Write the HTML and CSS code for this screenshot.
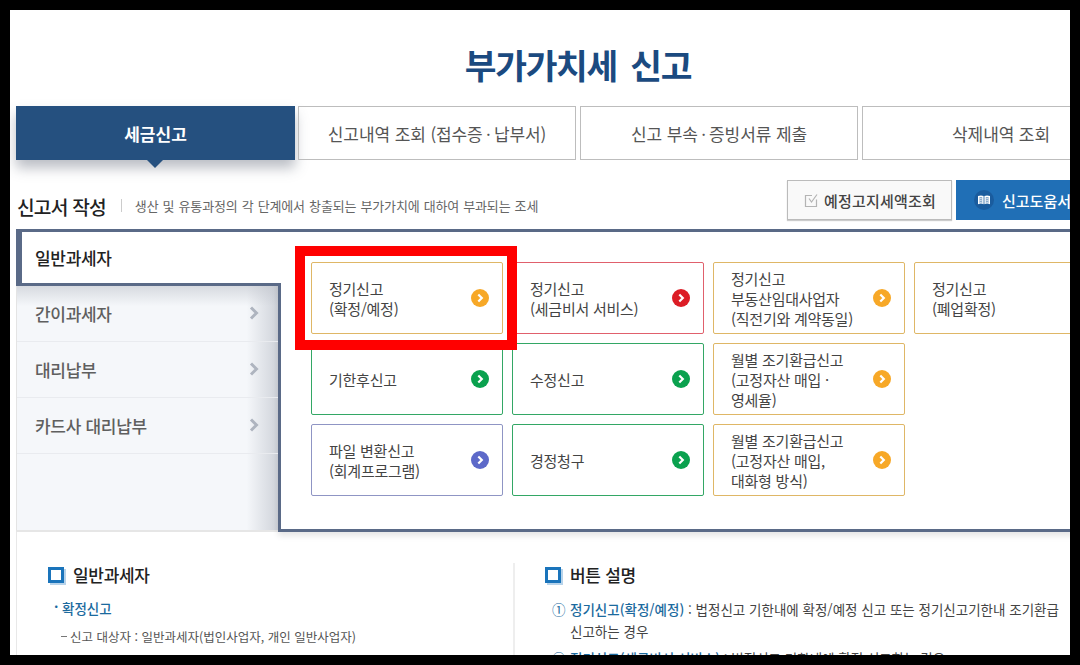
FILE: index.html
```html
<!DOCTYPE html>
<html lang="ko">
<head>
<meta charset="utf-8">
<title>부가가치세 신고</title>
<link rel="stylesheet" href="styles.css">
</head>
<body>
<div class="screen">
  <div class="page">
    <h1 class="title">부가가치세 신고</h1>
    <nav class="tabs">
      <a class="tab active">세금신고</a>
      <a class="tab">신고내역 조회 (접수증&thinsp;·&thinsp;납부서)</a>
      <a class="tab">신고 부속&thinsp;·&thinsp;증빙서류 제출</a>
      <a class="tab">삭제내역 조회</a>
    </nav>
    <div class="head-row">
      <div class="head-text">
        <h2>신고서 작성</h2>
        <p>생산 및 유통과정의 각 단계에서 창출되는 부가가치에 대하여 부과되는 조세</p>
      </div>
      <div class="head-btns">
        <a class="btn-light">
          <svg class="ico-check" viewBox="0 0 15 15"><path d="M12.5 6.5V13.5H1.5V2.5H8" fill="none" stroke="#b4b4b4" stroke-width="1.2"/><path d="M5 5.5 7.5 9 13 1.5" fill="none" stroke="#b4b4b4" stroke-width="1.2"/></svg>
          예정고지세액조회
        </a>
        <a class="btn-blue">
          <span class="book"><svg viewBox="0 0 20 20"><path d="M4 6c2-.8 4-.8 5.6 0v8.2C8 13.400 6 13.400 4 14.200zM16 6c-2-.8-4-.8-5.600 0v8.200c1.600-.8 3.600-.8 5.600 0z" fill="#fff"/><path d="M5.300 8c1-.3 2-.3 3 0M5.300 10c1-.3 2-.3 3 0M5.300 12c1-.3 2-.3 3 0M11.700 8c1-.3 2-.3 3 0M11.700 10c1-.3 2-.3 3 0M11.700 12c1-.3 2-.3 3 0" stroke="#1a5c9e" stroke-width=".8" fill="none"/></svg></span>
          신고도움서비스
        </a>
      </div>
    </div>
    <section class="panel">
      <ul class="side">
        <li class="side-item on">일반과세자</li>
        <li class="side-item">간이과세자<svg class="chev" viewBox="0 0 10 14"><path d="M2 1.500l5.500 5.500-5.500 5.500" fill="none" stroke="#aeb4bf" stroke-width="3"/></svg></li>
        <li class="side-item">대리납부<svg class="chev" viewBox="0 0 10 14"><path d="M2 1.500l5.500 5.500-5.500 5.500" fill="none" stroke="#aeb4bf" stroke-width="3"/></svg></li>
        <li class="side-item">카드사 대리납부<svg class="chev" viewBox="0 0 10 14"><path d="M2 1.500l5.500 5.500-5.500 5.500" fill="none" stroke="#aeb4bf" stroke-width="3"/></svg></li>
      </ul>
      <div class="main">
        <div class="grid">
          <a class="card yellow"><span>정기신고<br>(확정/예정)</span><svg class="go" viewBox="0 0 18 18"><circle cx="9" cy="9" r="9"/><path d="M7.300 5.500 10.800 9l-3.500 3.500"/></svg></a>
          <a class="card red"><span>정기신고<br>(세금비서 서비스)</span><svg class="go" viewBox="0 0 18 18"><circle cx="9" cy="9" r="9"/><path d="M7.300 5.500 10.800 9l-3.500 3.500"/></svg></a>
          <a class="card yellow"><span>정기신고<br>부동산임대사업자<br>(직전기와 계약동일)</span><svg class="go" viewBox="0 0 18 18"><circle cx="9" cy="9" r="9"/><path d="M7.300 5.500 10.800 9l-3.500 3.500"/></svg></a>
          <a class="card yellow"><span>정기신고<br>(폐업확정)</span></a>
          <a class="card green"><span>기한후신고</span><svg class="go" viewBox="0 0 18 18"><circle cx="9" cy="9" r="9"/><path d="M7.300 5.500 10.800 9l-3.500 3.500"/></svg></a>
          <a class="card green"><span>수정신고</span><svg class="go" viewBox="0 0 18 18"><circle cx="9" cy="9" r="9"/><path d="M7.300 5.500 10.800 9l-3.500 3.500"/></svg></a>
          <a class="card yellow"><span>월별 조기환급신고<br>(고정자산 매입 ·<br>영세율)</span><svg class="go" viewBox="0 0 18 18"><circle cx="9" cy="9" r="9"/><path d="M7.300 5.500 10.800 9l-3.500 3.500"/></svg></a>
          <span class="blank"></span>
          <a class="card violet"><span>파일 변환신고<br>(회계프로그램)</span><svg class="go" viewBox="0 0 18 18"><circle cx="9" cy="9" r="9"/><path d="M7.300 5.500 10.800 9l-3.500 3.500"/></svg></a>
          <a class="card green"><span>경정청구</span><svg class="go" viewBox="0 0 18 18"><circle cx="9" cy="9" r="9"/><path d="M7.300 5.500 10.800 9l-3.500 3.500"/></svg></a>
          <a class="card yellow"><span>월별 조기환급신고<br>(고정자산 매입,<br>대화형 방식)</span><svg class="go" viewBox="0 0 18 18"><circle cx="9" cy="9" r="9"/><path d="M7.300 5.500 10.800 9l-3.500 3.500"/></svg></a>
        </div>
      </div>
      <div class="highlight"></div>
    </section>
    <section class="info">
      <div class="info-col left">
        <h3><i class="sq"></i>일반과세자</h3>
        <p class="sub"><b>확정신고</b></p>
        <p class="dash">신고 대상자 : 일반과세자(법인사업자, 개인 일반사업자)</p>
        <p class="dash">신고 기간 : 과세기간 종료 후</p>
      </div>
      <div class="info-col right">
        <h3><i class="sq"></i>버튼 설명</h3>
        <p class="num"><em>①</em><span><b>정기신고(확정/예정)</b> : 법정신고 기한내에 확정/예정 신고 또는 정기신고기한내 조기환급 신고하는 경우</span></p>
        <p class="num"><em>②</em><span><b>정기신고(세금비서 서비스)</b> : 법정신고 기한내에 확정 신고하는 경우</span></p>
      </div>
    </section>
  </div>
</div>
</body>
</html>
```
FILE: styles.css
```css
* { box-sizing: border-box; }
html, body { margin: 0; height: 100%; background: #000; overflow: hidden; }
body { padding: 10px; font-family: "Noto Sans CJK KR", "Noto Sans", sans-serif; color: #444; }
a { display: block; }
.screen { width: 1060px; height: 645px; background: #fff; overflow: hidden; padding-left: 6px; }
.page { width: 1124px; }

.title { margin: 0; height: 96px; padding-top: 29px; text-align: center; font-size: 34.500px; line-height: 50px; font-weight: 700; color: #1b4a80; letter-spacing: -1.300px; word-spacing: 5px; }

.tabs { display: grid; grid-template-columns: repeat(4, 278px); gap: 4px; height: 54px; }
.tab { position: relative; display: flex; align-items: center; justify-content: center; border: 1px solid #bdbdbd; font-size: 17px; color: #555; letter-spacing: -.1px; }
.tab.active { width: 279px; background: #25507f; border-color: #25507f; color: #fff; font-weight: 700; box-shadow: 0 8px 12px rgba(60, 70, 90, .35); letter-spacing: 0; }
.tab.active::after { content: ""; position: absolute; left: 130px; top: 53px; border: 8px solid transparent; border-top-color: #25507f; border-bottom-width: 0; }

.head-row { display: flex; justify-content: space-between; align-items: flex-start; margin-top: 20px; height: 49px; }
.head-text { display: flex; align-items: center; height: 54px; }
.head-text h2 { margin: 0; font-size: 19.200px; font-weight: 500; color: #222; letter-spacing: -.8px; padding-left: 1px; padding-right: 15px; }
.head-text p { margin: 0 0 4px; padding-left: 14px; position: relative; font-size: 13px; color: #666; letter-spacing: -.15px; word-spacing: .65px; }
.head-text p::before { content: ""; position: absolute; left: 0; top: 3px; height: 13px; border-left: 1px solid #ccc; }
.head-btns { display: flex; gap: 4px; }
.btn-light { display: flex; align-items: center; width: 165px; height: 40px; padding-left: 16px; gap: 5px; background: #f9f9f9; border: 1px solid #bbb; box-shadow: 0 1px 1px #ccc; font-size: 15px; font-weight: 500; color: #444; letter-spacing: .2px; }
.ico-check { width: 15px; height: 15px; }
.btn-blue { display: flex; align-items: center; width: 184px; height: 40px; padding-left: 18px; gap: 8px; background: #206fb6; font-size: 15px; font-weight: 500; color: #fff; }
.book { width: 20px; height: 20px; border-radius: 50%; background: #1a5c9e; display: flex; }

.panel { position: relative; display: flex; height: 303px; border-top: 3px solid #5a6a87; }
.side { width: 262px; margin: 0; padding: 0; list-style: none; background: linear-gradient(180deg, rgba(190, 194, 202, .55) 54px, rgba(190, 194, 202, 0) 74px), linear-gradient(90deg, #f5f7fa 0, #f5f7fa 88%, #cfd3da 100%); border-left: 1px solid #e4e4e4; border-bottom: 2px solid #e6e6e6; }
.side-item { position: relative; display: flex; align-items: center; height: 56px; padding-left: 18px; font-size: 17px; font-weight: 500; color: #5f5f5f; letter-spacing: -.3px; border-bottom: 1px solid #e9ebef; }
.side-item.on { z-index: 1; width: 265px; margin-left: -1px; height: 54px; color: #222; background: #fff; border-left: 6px solid #5a6a87; border-bottom: 3px solid #5a6a87; padding-left: 13px; }
.chev { position: absolute; left: 232px; top: 20px; width: 10px; height: 14px; }
.main { flex: 1; padding: 30px 0 0 30px; border-left: 3px solid #5a6a87; border-bottom: 3px solid #5a6a87; box-shadow: 0 4px 6px rgba(0, 0, 0, .1); }
.grid { display: grid; grid-template-columns: repeat(4, 192px); grid-auto-rows: 72px; gap: 9px; }
.card { display: flex; align-items: center; justify-content: space-between; padding: 0 13.500px 0 17px; border: 1px solid; border-radius: 2px; font-size: 15px; line-height: 20px; color: #444; letter-spacing: -.25px; }
.card span { padding-top: 2px; }
.go { width: 18px; height: 18px; flex: none; }
.go path { fill: none; stroke: #fff; stroke-width: 2.200; }
.yellow { border-color: #dfb766; }
.yellow .go circle { fill: #f7a827; }
.red { border-color: #e0606c; }
.red .go circle { fill: #dc1d26; }
.green { border-color: #33a765; }
.green .go circle { fill: #0aa14e; }
.violet { border-color: #8f95c4; }
.violet .go circle { fill: #5d69c9; }
.highlight { position: absolute; z-index: 2; left: 279px; top: 14px; width: 222px; height: 104px; border: 10px solid #f00; }

.info { display: flex; height: 130px; padding-top: 31px; border-left: 1px solid #e8e8e8; }
.info-col { font-size: 13.500px; line-height: 22px; color: #444; }
.info-col.left { width: 498px; padding-left: 31px; border-right: 2px solid #eee; }
.info-col.right { padding-left: 30px; width: 545px; }
.info-col h3 { display: flex; align-items: center; margin: 0 0 9px; font-size: 17px; font-weight: 500; line-height: 24px; color: #222; letter-spacing: -.3px; }
.info-col.right h3 { margin-bottom: 11px; }
.sq { width: 16px; height: 16px; margin-right: 9px; border: 3px solid #1a74bb; box-shadow: 2px 2px 0 #b7d3ea; }
.info-col p { margin: 0; }
.sub { position: relative; padding-left: 14px; line-height: 24px; }
.sub b { font-weight: 500; color: #1b6a9e; font-size: 13.500px; }
.sub::before { content: "·"; position: absolute; left: 6px; top: -2px; font-weight: 700; color: #1b6a9e; }
.info-col p.dash { position: relative; padding-left: 22px; margin-top: 6px; color: #555; font-size: 12.500px; }
.dash::before { content: ""; position: absolute; left: 13px; top: 10px; width: 6px; border-top: 1px solid #777; }
.num { display: flex; gap: 4px; padding-left: 7px; }
.info-col p.num { margin-bottom: 5px; }
.num em { font-style: normal; color: #1b6a9e; width: 14px; flex: none; }
.num b { font-weight: 500; color: #1b6a9e; }
```
